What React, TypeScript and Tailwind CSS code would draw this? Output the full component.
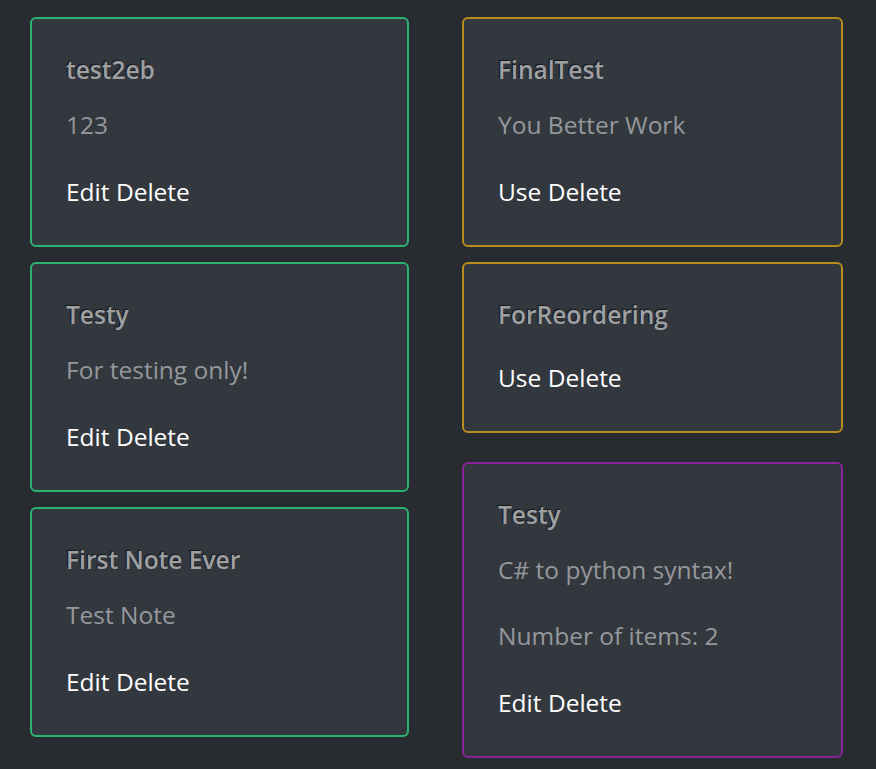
const LEFT = [
  { title: 'test2eb', lines: ['123'], actions: 'Edit Delete' },
  { title: 'Testy', lines: ['For testing only!'], actions: 'Edit Delete' },
  { title: 'First Note Ever', lines: ['Test Note'], actions: 'Edit Delete' },
]

type CardProps = {
  title: string
  lines: string[]
  actions: string
  border: string
  className?: string
}

function Card({ title, lines, actions, border, className = '' }: CardProps) {
  return (
    <div className={`rounded-[6px] border-2 bg-[#33373e] px-[34px] pt-[34px] pb-[36px] ${border} ${className}`}>
      <h5 className="h-[34px] text-[24.5px] leading-[34px] font-semibold text-[#9fa0a2] [text-shadow:-1px_-1px_1px_#15171a] whitespace-nowrap">
        {title}
      </h5>
      {lines.map((l, i) => (
        <p key={i} className={`${i === 0 ? 'mt-[21px]' : 'mt-[32px]'} h-[34px] text-[24.5px] leading-[34px] text-[#95989c] whitespace-nowrap`}>
          {l}
        </p>
      ))}
      <div className={`${lines.length ? 'mt-[33px]' : 'mt-[29px]'} h-[34px] text-[24.5px] leading-[34px] text-white whitespace-nowrap`}>
        {actions}
      </div>
    </div>
  )
}

export default function App() {
  return (
    <div
      className="min-h-screen bg-[#282b30] pt-[17px] pl-[30px] flex gap-[53px] items-start"
      style={{ fontFamily: '"Open Sans", "Noto Sans", sans-serif' }}
    >
      <div className="w-[379px] flex flex-col gap-[15px]">
        {LEFT.map((c, i) => (
          <Card key={i} {...c} border="border-[#2db371]" />
        ))}
      </div>
      <div className="w-[381px] flex flex-col">
        <Card title="FinalTest" lines={['You Better Work']} actions="Use Delete" border="border-[#b68d1c]" />
        <Card title="ForReordering" lines={[]} actions="Use Delete" border="border-[#b68d1c]" className="mt-[15px]" />
        <Card
          title="Testy"
          lines={['C# to python syntax!', 'Number of items: 2']}
          actions="Edit Delete"
          border="border-[#88249a]"
          className="mt-[29px]"
        />
      </div>
    </div>
  )
}
